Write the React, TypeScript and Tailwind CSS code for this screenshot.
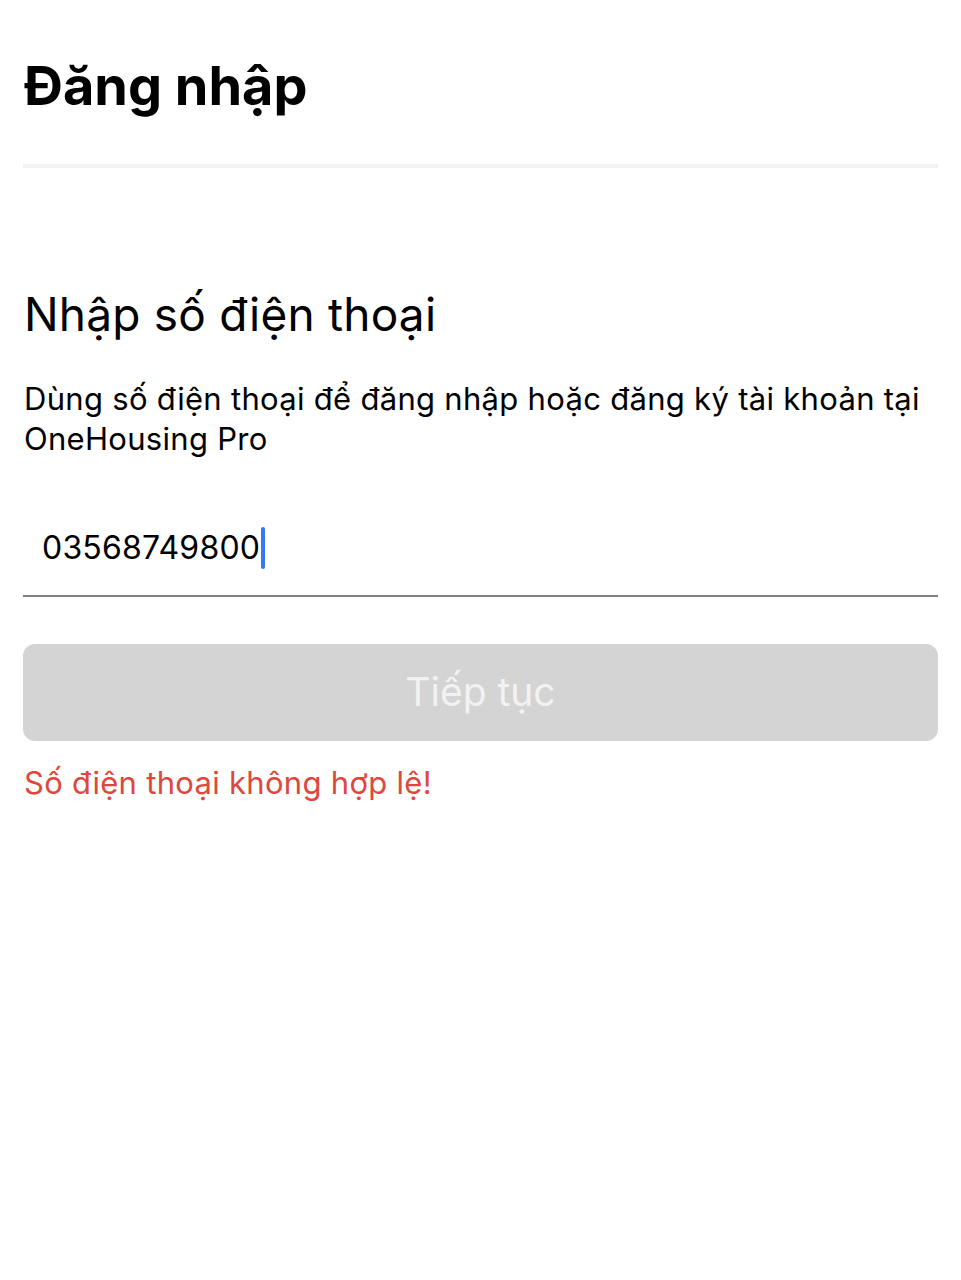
import React from "react";

export default function App() {
  return (
    <div className="w-[961px] h-[1280px] bg-white px-[23px] text-black" style={{ fontFamily: "Inter, 'Noto Sans', sans-serif" }}>
      <div className="pt-[52px] pb-[44px]">
        <h1 className="text-[54px] leading-[68px] font-bold pl-[1px]">Đăng nhập</h1>
      </div>
      <div className="h-[4px] bg-[#f2f2f2]" />
      <h2 className="mt-[118px] text-[46px] leading-[56px] font-normal pl-[1px] tracking-[0.2px]">Nhập số điện thoại</h2>
      <p className="mt-[37px] text-[31px] leading-[40px] pl-[1px] tracking-[0.3px]">
        Dùng số điện thoại để đăng nhập hoặc đăng ký tài khoản tại OneHousing Pro
      </p>
      <div className="mt-[52px] h-[86px] border-b-2 border-[#808080] flex items-center pl-[19px] pb-[10px]">
        <span className="text-[32px] leading-[40px] tracking-[0.2px]">03568749800</span>
        <span className="ml-[1px] w-[4px] h-[42px] bg-[#3478f6] rounded-full" />
      </div>
      <button className="mt-[47px] w-full h-[97px] rounded-[12px] bg-[#d4d4d4] text-[39px] text-[#f2f2f2] flex items-center justify-center">
        Tiếp tục
      </button>
      <p className="mt-[22px] text-[31px] leading-[40px] text-[#e0473c] pl-[1px] tracking-[0.3px]">Số điện thoại không hợp lệ!</p>
    </div>
  );
}
